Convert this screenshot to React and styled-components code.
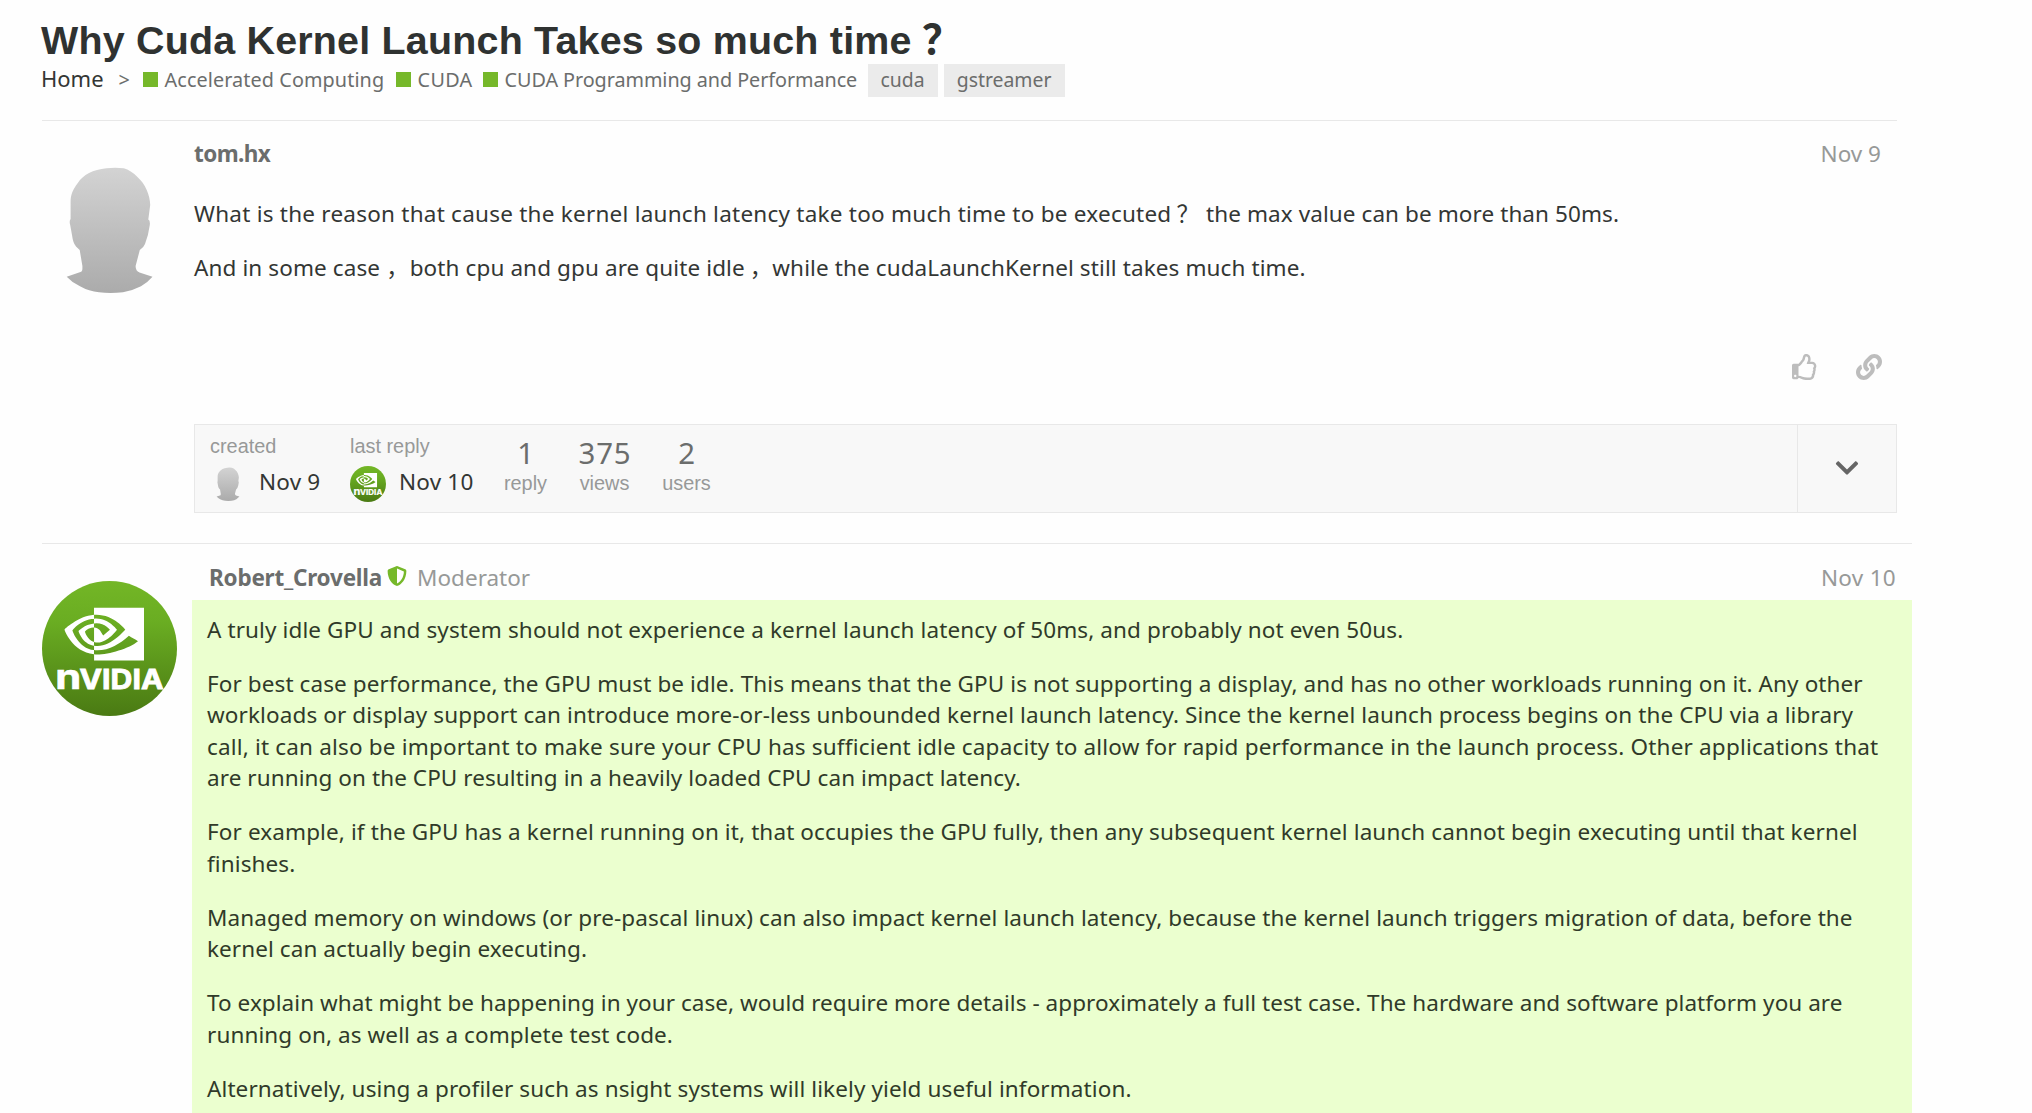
import React from 'react';
import styled, { createGlobalStyle } from 'styled-components';
import { FaRegThumbsUp, FaLink, FaChevronDown, FaShieldAlt } from 'react-icons/fa';
import { SiNvidia } from 'react-icons/si';

const GlobalStyle = createGlobalStyle`
  *, *::before, *::after { box-sizing: border-box; }
  html, body { margin: 0; padding: 0; background: #fefefe; }
  body {
    height: 1113px;
    overflow: hidden;
    color: #333634;
    font-family: "Noto Sans", "Noto Sans CJK TC", sans-serif;
    font-size: 22.5px;
    line-height: 31.5px;
  }
`;

const Page = styled.main`
  height: 1113px;
  padding: 16px 0 0 42px;
  overflow: hidden;
`;

const TopicHeader = styled.header`
  height: 104px;
`;

const Title = styled.h1`
  margin: 0;
  margin-left: -1px;
  color: #2f3231;
  font: bold 39.4px/44px "Liberation Sans", "Noto Sans CJK SC", sans-serif;
  letter-spacing: 0.22px;
  white-space: nowrap;
`;

const TitleMark = styled.span`
  margin-left: 10px;
  font-family: "Noto Sans CJK SC", sans-serif;
  font-size: 41px;
  line-height: 1;
`;

const Crumbs = styled.nav`
  display: flex;
  align-items: baseline;
  margin-top: 1px;
  line-height: 31px;
  font-size: 19.8px;
  color: #6b6d6c;
  white-space: nowrap;
`;

const Home = styled.a`
  margin-left: -1px;
  font-size: 22px;
  color: #333634;
`;

const Separator = styled.span`
  margin: 0 12px 0 15px;
  width: 12px;
`;

const Category = styled.a`
  display: flex;
  align-items: baseline;
  width: ${(p) => p.$width}px;
  letter-spacing: ${(p) => p.$spacing || 0}px;

  &::before {
    content: "";
    flex: none;
    width: 15px;
    height: 15px;
    margin-right: 7px;
    background: #76b82a;
  }
`;

const Tag = styled.a`
  width: ${(p) => p.$width}px;
  margin-right: 6px;
  padding-bottom: 2px;
  text-align: center;
  background: #ebebeb;
  font-size: 19.4px;
`;

const Post = styled.article`
  display: flex;
  width: ${(p) => p.$width}px;
  height: ${(p) => p.$height}px;
  border-top: 1px solid #e8e8e8;
`;

const AvatarColumn = styled.div`
  flex: none;
  width: ${(p) => p.$width}px;
  padding-top: ${(p) => p.$top}px;
`;

const Body = styled.div`
  flex: 1;
  min-width: 0;
  display: flex;
  flex-direction: column;
`;

const Meta = styled.div`
  display: flex;
  align-items: center;
  margin-top: ${(p) => p.$top}px;
  padding: 0 16px 0 ${(p) => p.$left}px;
`;

const UserName = styled.span`
  font-weight: 700;
  color: #6b6d6c;
  letter-spacing: ${(p) => p.$spacing}px;
`;

const Role = styled.span`
  margin-left: 10px;
  color: #979998;
`;

const ShieldIcon = styled(FaShieldAlt)`
  width: 20px;
  height: 20px;
  margin: -4px 0 0 5px;
  color: #76b82a;
`;

const PostDate = styled.span`
  margin-left: auto;
  color: #979998;
  letter-spacing: ${(p) => p.$spacing || 0}px;
`;

const Paragraph = styled.p`
  margin: 0 0 22.5px;
  color: ${(p) => p.$color || 'inherit'};
`;

const Line = styled.span`
  display: block;
  white-space: nowrap;
  letter-spacing: ${(p) => p.$spacing}px;
`;

const Phrase = styled.span`
  letter-spacing: ${(p) => p.$spacing}px;
`;

const Wide = styled.span`
  display: inline-block;
  margin-left: ${(p) => p.$before || 0}px;
  margin-right: ${(p) => p.$after}px;
  font-family: "Noto Sans CJK SC", sans-serif;
  line-height: 1;
  letter-spacing: 0;
`;

const FirstPostText = styled.div`
  height: 143px;
  margin-top: 28px;
`;

const Actions = styled.div`
  display: flex;
  justify-content: flex-end;
  gap: 38px;
  height: 27px;
  padding-right: 15px;
  margin-top: 13px;
  color: #bdbdbd;

  svg { width: 26px; height: 26px; }
`;

const TopicMap = styled.section`
  display: flex;
  height: 89px;
  margin-top: 43px;
  border: 1px solid #e8e8e8;
  background: #f8f8f8;
`;

const Stats = styled.div`
  flex: 1;
  display: flex;
  padding: 9px 0 0 15px;
`;

const Activity = styled.div`
  width: ${(p) => p.$width}px;
`;

const Label = styled.div`
  color: #979998;
  font: 19.9px/24px "Liberation Sans", sans-serif;
`;

const ActivityRow = styled.div`
  display: flex;
  gap: 13px;
  height: 36px;
  margin-top: 8px;
  line-height: 32px;
  letter-spacing: 0.2px;
`;

const Count = styled.div`
  width: ${(p) => p.$width}px;
  margin-right: 31.5px;
  padding-top: 3px;
  display: flex;
  flex-direction: column;
  align-items: center;
  gap: 1px;
  white-space: nowrap;
`;

const CountValue = styled.span`
  color: #6b6d6c;
  font-size: 29.4px;
  line-height: 33px;
  letter-spacing: 0.8px;
  padding-left: 1px;
`;

const Expand = styled.button`
  width: 99px;
  padding: 0;
  border: 0;
  border-left: 1px solid #e8e8e8;
  background: transparent;
  color: #666;
  display: flex;
  align-items: center;
  justify-content: center;

  svg { width: 26px; height: 26px; }
`;

const Reply = styled.div`
  flex: 1;
  margin-top: 6px;
  padding: 14px 0 0 15px;
  background: #ebffcf;
`;

const HeadAvatar = ({ size }) => (
  <svg width={size} height={size} viewBox="0 0 135 135" aria-hidden="true">
    <defs>
      <linearGradient id={`head${size}`} x1="0" y1="0" x2="0" y2="1">
        <stop offset="0" stopColor="#d3d3d3" />
        <stop offset="1" stopColor="#ababab" />
      </linearGradient>
    </defs>
    <path
      fill={`url(#head${size})`}
      d="M64.5 6.3C51 7.500 41 13 35.800 21C30.500 28 28.600 33 28.600 40L28.600 57Q27 59 28.200 63L30 73Q31 81 34 84.500L37.700 88L40.400 104V107Q40.400 110 37 110.500L24.700 114.700Q30 120.500 38 124.300Q47 129.500 57 130.300Q68 131.500 81 130.300Q91 128.500 99 124.300Q106 120 110.500 114.700L97.500 110.500Q93.600 109 93.600 104L97.800 88Q102 85 103 82L105.900 73L107.800 63Q108.300 58.500 106.300 57.500L108.200 43C108 33 103.500 22 95.200 14.700Q89 8.500 81.800 6.300Q73 5.200 64.500 6.300Z"
    />
  </svg>
);

const NvidiaAvatar = ({ size }) => (
  <svg width={size} height={size} viewBox="0 0 135 135" role="img" aria-label="NVIDIA">
    <defs>
      <linearGradient id={`green${size}`} x1="0" y1="0" x2="0" y2="1">
        <stop offset="0" stopColor="#73b626" />
        <stop offset="0.3" stopColor="#6aad22" />
        <stop offset="1" stopColor="#4a7a13" />
      </linearGradient>
    </defs>
    <circle cx="67.5" cy="67.5" r="67.5" fill={`url(#green${size})`} />
    <SiNvidia x="22.3" y="13.2" size={79.7} color="#fff" />
    <g fill="#fff" fontFamily="Inter, sans-serif" fontWeight="700">
      <text x="13.2" y="108" fontSize="34.500" textLength="26" lengthAdjust="spacingAndGlyphs" stroke="#fff" strokeWidth="0.6">n</text>
      <text x="37.5" y="108" fontSize="26.500" textLength="84" lengthAdjust="spacingAndGlyphs" stroke="#fff" strokeWidth="0.8">VIDIA</text>
    </g>
  </svg>
);

const replyParagraphs = [
  [['A truly idle GPU and system should not experience a kernel launch latency of 50ms, and probably not even 50us.', 0.11]],
  [
    ['For best case performance, the GPU must be idle. This means that the GPU is not supporting a display, and has no other workloads running on it. Any other', 0.1],
    ['workloads or display support can introduce more-or-less unbounded kernel launch latency. Since the kernel launch process begins on the CPU via a library', 0.115],
    ['call, it can also be important to make sure your CPU has sufficient idle capacity to allow for rapid performance in the launch process. Other applications that', 0.182],
    ['are running on the CPU resulting in a heavily loaded CPU can impact latency.', 0.08],
  ],
  [
    ['For example, if the GPU has a kernel running on it, that occupies the GPU fully, then any subsequent kernel launch cannot begin executing until that kernel', 0.115],
    ['finishes.', 0.1],
  ],
  [
    ['Managed memory on windows (or pre-pascal linux) can also impact kernel launch latency, because the kernel launch triggers migration of data, before the', 0.1],
    ['kernel can actually begin executing.', 0.08],
  ],
  [
    ['To explain what might be happening in your case, would require more details - approximately a full test case. The hardware and software platform you are', 0.06],
    ['running on, as well as a complete test code.', 0.1],
  ],
  [['Alternatively, using a profiler such as nsight systems will likely yield useful information.', 0.1]],
];

export default function App() {
  return (
    <>
      <GlobalStyle />
      <Page>
        <TopicHeader>
          <Title>Why Cuda Kernel Launch Takes so much time<TitleMark>？</TitleMark></Title>
          <Crumbs>
            <Home>Home</Home>
            <Separator>&gt;</Separator>
            <Category $width={253} $spacing={0.1}>Accelerated Computing</Category>
            <Category $width={87} $spacing={0.3}>CUDA</Category>
            <Category $width={385} $spacing={-0.06}>CUDA Programming and Performance</Category>
            <Tag $width={70}>cuda</Tag>
            <Tag $width={121}>gstreamer</Tag>
          </Crumbs>
        </TopicHeader>

        <Post $width={1855} $height={423}>
          <AvatarColumn $width={152} $top={41}>
            <HeadAvatar size={135} />
          </AvatarColumn>
          <Body>
            <Meta $top={17} $left={0}>
              <UserName $spacing={-0.6}>tom.hx</UserName>
              <PostDate>Nov 9</PostDate>
            </Meta>
            <FirstPostText>
              <Paragraph>
                <Line $spacing={0.24}>
                  What is the reason that cause the kernel launch latency take too much time to be executed
                  <Wide $before={5} $after={7}>？</Wide>
                  <Phrase $spacing={0.09}>the max value can be more than 50ms.</Phrase>
                </Line>
              </Paragraph>
              <Paragraph>
                <Line $spacing={0.11}>
                  And in some case
                  <Wide $before={6} $after={1}>，</Wide>
                  both cpu and gpu are quite idle
                  <Wide $before={5} $after={0}>，</Wide>
                  while the cudaLaunchKernel still takes much time.
                </Line>
              </Paragraph>
            </FirstPostText>
            <Actions>
              <FaRegThumbsUp />
              <FaLink />
            </Actions>
            <TopicMap>
              <Stats>
                <Activity $width={140}>
                  <Label>created</Label>
                  <ActivityRow><HeadAvatar size={36} />Nov 9</ActivityRow>
                </Activity>
                <Activity $width={154}>
                  <Label>last reply</Label>
                  <ActivityRow><NvidiaAvatar size={36} />Nov 10</ActivityRow>
                </Activity>
                <Count $width={43}><CountValue>1</CountValue><Label>reply</Label></Count>
                <Count $width={52}><CountValue>375</CountValue><Label>views</Label></Count>
                <Count $width={49}><CountValue>2</CountValue><Label>users</Label></Count>
              </Stats>
              <Expand aria-label="Expand topic details"><FaChevronDown /></Expand>
            </TopicMap>
          </Body>
        </Post>

        <Post $width={1870} $height={570}>
          <AvatarColumn $width={150} $top={37}>
            <NvidiaAvatar size={135} />
          </AvatarColumn>
          <Body>
            <Meta $top={18} $left={17}>
              <UserName $spacing={-0.22}>Robert_Crovella</UserName>
              <ShieldIcon />
              <Role>Moderator</Role>
              <PostDate $spacing={0.3}>Nov 10</PostDate>
            </Meta>
            <Reply>
              {replyParagraphs.map((lines, i) => (
                <Paragraph key={i} $color="#303a29">
                  {lines.map(([text, spacing]) => (
                    <Line key={text} $spacing={spacing}>{text}</Line>
                  ))}
                </Paragraph>
              ))}
            </Reply>
          </Body>
        </Post>
      </Page>
    </>
  );
}
